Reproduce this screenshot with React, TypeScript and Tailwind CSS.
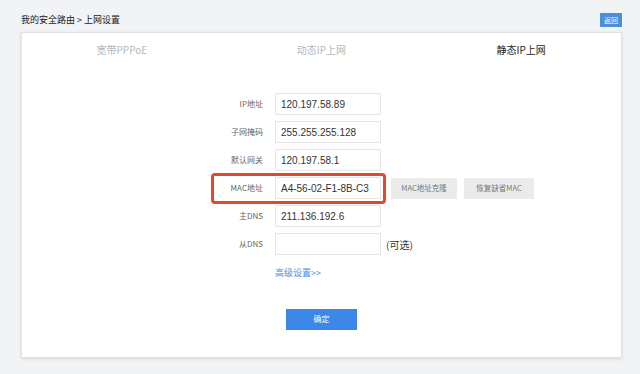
import React from "react";

const cjk = { fontFamily: '"Noto Sans CJK SC", "Noto Sans", sans-serif' };
const num = { fontFamily: '"Liberation Sans", "Noto Sans CJK SC", sans-serif' };

const rows = [
  { label: "IP地址", value: "120.197.58.89" },
  { label: "子网掩码", value: "255.255.255.128" },
  { label: "默认网关", value: "120.197.58.1" },
  { label: "MAC地址", value: "A4-56-02-F1-8B-C3", mac: true },
  { label: "主DNS", value: "211.136.192.6" },
  { label: "从DNS", value: "", optional: true },
];

export default function App() {
  return (
    <div className="w-[640px] h-[374px] bg-[#f2f3f5] overflow-hidden" style={cjk}>
      {/* Header */}
      <div className="flex justify-between items-start pl-[21px] pr-[18px] pt-[13px] h-[32px]">
        <span className="text-[9px] leading-[11px] text-[#222] mt-[1px]">
          我的安全路由 &gt; 上网设置
        </span>
        <button className="w-[22px] h-[14px] bg-[#4a8fdb] text-white text-[7px] leading-[14px] rounded-[1px]">
          返回
        </button>
      </div>

      {/* Card */}
      <div className="ml-[21px] w-[601px] h-[326px] bg-white border border-[#e2e3e5] shadow-[0_1px_3px_rgba(0,0,0,0.12)] flex flex-col">
        <div className="grid grid-cols-3 h-[32px] items-center text-[10px]">
          <div className="text-center text-[#b8b8b8]">宽带PPPoE</div>
          <div className="text-center text-[#b8b8b8]">动态IP上网</div>
          <div className="text-center text-[#222]">静态IP上网</div>
        </div>

        <div className="flex flex-col gap-[6px] mt-[28px]">
          {rows.map((r) => (
            <div key={r.label} className="relative flex items-center h-[22px]">
              <span className="w-[241px] text-right text-[8px] text-[#666]">{r.label}</span>
              <div
                className="ml-[12px] w-[106px] h-[22px] border border-[#e6e6e6] bg-white flex items-center pl-[5px] text-[10px] text-[#333]"
                style={num}
              >
                {r.value}
              </div>
              {r.mac && (
                <>
                  <button className="ml-[10px] w-[66px] h-[21px] bg-[#ebebeb] text-[7.5px] text-[#777]">
                    MAC地址克隆
                  </button>
                  <button className="ml-[7px] w-[70px] h-[21px] bg-[#ebebeb] text-[7.5px] text-[#777]">
                    恢复缺省MAC
                  </button>
                  <div className="absolute left-[189px] top-[-4px] w-[175px] h-[31px] border-[3px] border-[#de4b2c] rounded-[4px]" />
                </>
              )}
              {r.optional && <span className="ml-[5px] text-[10px] text-[#333]">(可选)</span>}
            </div>
          ))}
        </div>

        <div className="pl-[253px] mt-[11px] text-[9px] text-[#4a90e2]">高级设置&gt;&gt;</div>

        <div className="flex justify-center mt-[29px]">
          <button className="w-[71px] h-[21px] bg-[#3d87e8] text-white text-[8px]">确定</button>
        </div>
      </div>
    </div>
  );
}
